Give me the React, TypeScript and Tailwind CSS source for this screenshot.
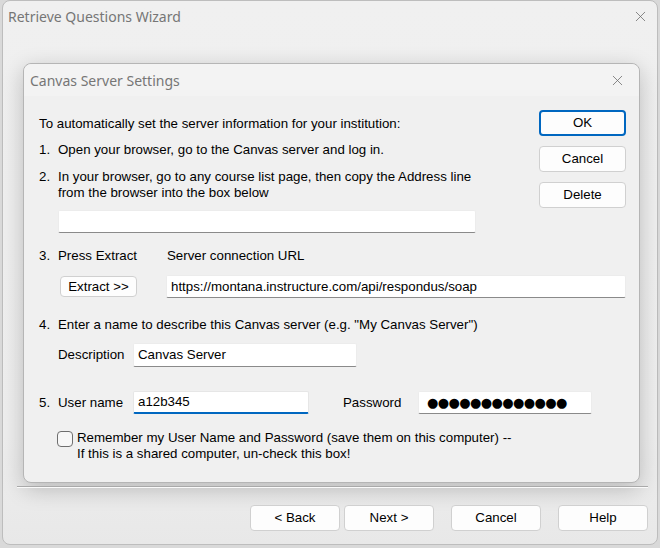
import { X } from 'lucide-react'

function WinButton({ children, className = '' }: { children: React.ReactNode; className?: string }) {
  return (
    <button
      className={`flex items-center justify-center rounded-[4px] border border-[#d0d0d0] bg-[#fdfdfd] text-[13.3px] text-black ${className}`}
    >
      {children}
    </button>
  )
}

function TextBox({ value, className = '', focused = false }: { value?: string; className?: string; focused?: boolean }) {
  return (
    <div
      className={`flex items-center rounded-[2px] border bg-white px-[4px] text-black ${
        focused
          ? 'border-[#e6e6e6] border-b-2 border-b-[#0067c0]'
          : 'border-[#ececec] border-b-[#8a8a8a]'
      } ${className}`}
    >
      {value}
    </div>
  )
}

export default function App() {
  return (
    <div className="h-[548px] w-[660px] overflow-hidden bg-[#d9d9d9] font-['Liberation_Sans',Arial,sans-serif]">
      {/* Outer wizard window */}
      <div className="ml-[2px] flex h-[545px] w-[656px] flex-col rounded-[8px] border border-[#bdbdbd] bg-[linear-gradient(to_bottom,#f0f0f0_0%,#eeeeee_80%,#e8e8e8_100%)]">
        <div className="flex h-[31px] shrink-0 items-center justify-between pl-[5px] pr-[8px]">
          <span className="font-['Noto_Sans',sans-serif] text-[14px] text-[#767676]">Retrieve Questions Wizard</span>
          <X size={17} strokeWidth={1.1} className="text-[#6a6a6a]" />
        </div>

        {/* Canvas Server Settings dialog */}
        <div className="ml-[20px] mt-[31px] flex h-[420px] w-[617px] flex-col rounded-[8px] border border-[#b5b5b5] bg-[#f0f0f0] shadow-[0_6px_22px_rgba(0,0,0,0.22)]">
          <div className="flex h-[32px] shrink-0 items-center justify-between rounded-t-[8px] bg-[#f3f3f3] pl-[6px] pr-[13px]">
            <span className="font-['Noto_Sans',sans-serif] text-[14px] text-[#767676]">Canvas Server Settings</span>
            <X size={17} strokeWidth={1.1} className="text-[#6a6a6a]" />
          </div>

          <div className="flex flex-col pl-[15px] pr-[13px] pt-[14px] text-[13.3px] leading-[16px] text-black">
            <div className="flex justify-between">
              <div className="flex flex-col">
                <p className="mt-[6px]">To automatically set the server information for your institution:</p>
                <p className="mt-[10px]">
                  <span className="inline-block w-[19px]">1.</span>Open your browser, go to the Canvas server and log in.
                </p>
                <p className="mt-[11px]">
                  <span className="inline-block w-[19px]">2.</span>In your browser, go to any course list page, then copy the Address line
                </p>
                <p className="pl-[19px]">from the browser into the box below</p>
                <TextBox className="ml-[19px] mt-[9px] h-[23px] w-[418px]" />
              </div>
              <div className="flex w-[87px] flex-col gap-[10px]">
                <button className="flex h-[26px] items-center justify-center rounded-[4px] border-2 border-[#0067c0] bg-[#fdfdfd] text-[13.3px] text-black">
                  OK
                </button>
                <WinButton className="h-[26px]">Cancel</WinButton>
                <WinButton className="h-[26px]">Delete</WinButton>
              </div>
            </div>

            <div className="mt-[15px] flex">
              <span className="w-[128px]">
                <span className="inline-block w-[19px]">3.</span>Press Extract
              </span>
              <span>Server connection URL</span>
            </div>
            <div className="mt-[11px] flex items-center">
              <WinButton className="ml-[21px] h-[21px] w-[77px]">Extract &gt;&gt;</WinButton>
              <TextBox
                className="ml-[29px] h-[23px] w-[460px]"
                value="https://montana.instructure.com/api/respondus/soap"
              />
            </div>

            <p className="mt-[19px]">
              <span className="inline-block w-[19px]">4.</span>Enter a name to describe this Canvas server (e.g. "My Canvas Server")
            </p>
            <div className="mt-[10px] flex items-center">
              <span className="w-[94px] pl-[19px]">Description</span>
              <TextBox className="h-[24px] w-[224px]" value="Canvas Server" />
            </div>

            <div className="mt-[24px] flex items-center">
              <span className="w-[94px]">
                <span className="inline-block w-[19px]">5.</span>User name
              </span>
              <TextBox className="h-[23px] w-[176px]" value="a12b345" focused />
              <span className="ml-[34px] w-[75px]">Password</span>
              <TextBox
                className="h-[23px] w-[174px] pl-[8px] font-['DejaVu_Sans',sans-serif] text-[13px] leading-[16px] tracking-[-0.6px]"
                value="●●●●●●●●●●●●●"
              />
            </div>

            <div className="ml-[18px] mt-[16px] flex items-start">
              <span className="mt-[1px] h-[16px] w-[16px] shrink-0 rounded-[4px] border border-[#6e6e6e] bg-[#f7f7f7]" />
              <div className="ml-[4px]">
                <p>Remember my User Name and Password (save them on this computer) --</p>
                <p>If this is a shared computer, un-check this box!</p>
              </div>
            </div>
          </div>
        </div>

        {/* Separator */}
        <div className="ml-[14px] mt-[3px] h-[2px] w-[631px] border-t border-[#a9a9a9] border-b border-b-[#fafafa]" />

        {/* Wizard buttons */}
        <div className="mt-[17px] flex pl-[247px]">
          <WinButton className="h-[26px] w-[90px]">&lt; Back</WinButton>
          <WinButton className="ml-[4px] h-[26px] w-[90px]">Next &gt;</WinButton>
          <WinButton className="ml-[17px] h-[26px] w-[90px]">Cancel</WinButton>
          <WinButton className="ml-[17px] h-[26px] w-[90px]">Help</WinButton>
        </div>
      </div>
    </div>
  )
}
